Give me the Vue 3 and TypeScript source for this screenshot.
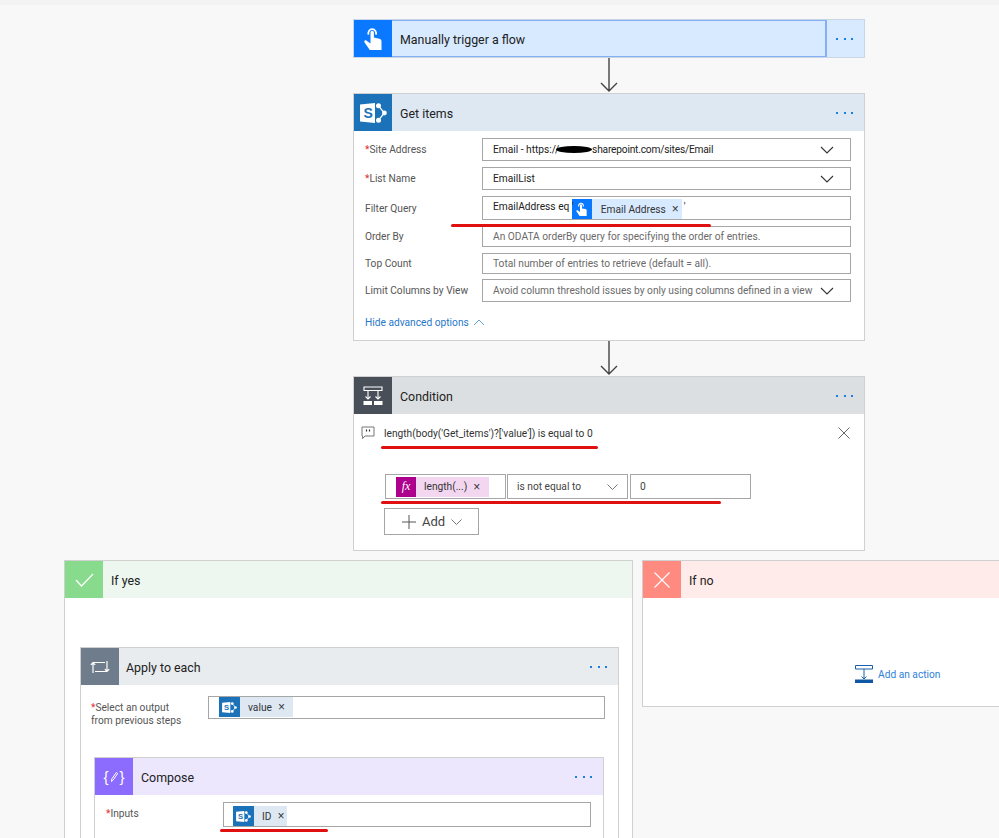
<script setup lang="ts">
interface Row { label: string; req?: boolean; value: string; ph?: boolean; chevron?: boolean; token?: boolean; h: number }
const rows: Row[] = [
  { label: 'Site Address', req: true, value: 'Email - https://', chevron: true, h: 23 },
  { label: 'List Name', req: true, value: 'EmailList', chevron: true, h: 23 },
  { label: 'Filter Query', value: 'EmailAddress eq \'', token: true, h: 24 },
  { label: 'Order By', value: 'An ODATA orderBy query for specifying the order of entries.', ph: true, h: 21 },
  { label: 'Top Count', value: 'Total number of entries to retrieve (default = all).', ph: true, h: 21 },
  { label: 'Limit Columns by View', value: 'Avoid column threshold issues by only using columns defined in a view', ph: true, chevron: true, h: 23 },
]
</script>

<template>
  <div class="page">
    <div class="topband"></div>
    <div class="flow">
      <section class="card trigger">
        <header class="head">
          <span class="ico">
            <svg width="18" height="23" viewBox="0 0 18 23"><path fill="#fff" d="M6.5 5.5a1.7 1.7 0 0 1 3.4 0V10.5l5.4 1.2c1.4.3 2.2 1.3 2.2 2.6V23H5.8L.6 15.4c-.9-1.3.7-2.7 2-1.7l3.9 2.9z"/><path fill="none" stroke="#fff" stroke-width="1.7" d="M4.6 7.6a3.9 3.9 0 1 1 7.2 0"/></svg>
          </span>
          <span class="title">Manually trigger a flow</span>
          <span class="more"><i></i><i></i><i></i></span>
        </header>
      </section>
      <div class="arrow"><svg width="18" height="35" viewBox="0 0 18 35"><path fill="none" stroke="#444" stroke-width="1.4" d="M9 0v33M1 25l8 8 8-8"/></svg></div>

      <section class="card sp-card">
        <header class="head">
          <span class="ico">
            <svg width="27" height="20" viewBox="0 0 27 20"><path fill="none" stroke="#fff" stroke-width="1.3" d="M18.5 2.8L24.4 10l-5.9 7.2"/><circle cx="18.5" cy="2.8" r="2.5" fill="#fff"/><circle cx="24.4" cy="10" r="2.4" fill="#fff"/><circle cx="18.5" cy="17.2" r="2.5" fill="#fff"/><path fill="#fff" d="M0 1.5L15 0v20L0 18.5z"/><text x="3.6" y="15" font-size="14" font-weight="700" fill="#1c72b8" font-family="Liberation Sans, sans-serif">S</text></svg>
          </span>
          <span class="title">Get items</span>
          <span class="more"><i></i><i></i><i></i></span>
        </header>
        <div class="fields">
          <div v-for="r in rows" :key="r.label" class="field" :style="{ height: r.h + 'px' }">
            <label class="lbl"><b v-if="r.req">*</b>{{ r.label }}</label>
            <div class="input" :class="{ ph: r.ph }">
              <template v-if="r.label === 'Site Address'">
                <span>Email - https://</span><span class="scribble"></span><span class="tight">sharepoint.com/sites/Email</span>
              </template>
              <template v-else-if="r.token">
                <span class="lift">EmailAddress eq '</span>
                <span class="token tok-blue">
                  <span class="tok-ico tok-ico-blue">
                    <svg width="11" height="14" viewBox="0 0 18 23"><path fill="#fff" d="M6.5 5.5a1.7 1.7 0 0 1 3.4 0V10.5l5.4 1.2c1.4.3 2.2 1.3 2.2 2.6V23H5.8L.6 15.4c-.9-1.3.7-2.7 2-1.7l3.9 2.9z"/><path fill="none" stroke="#fff" stroke-width="1.7" d="M4.6 7.6a3.9 3.9 0 1 1 7.2 0"/></svg>
                  </span>
                  <span class="tok-text">Email Address</span><span class="tok-x">×</span>
                </span>
                <span class="tick lift">'</span>
              </template>
              <span v-else class="val">{{ r.value }}</span>
              <svg v-if="r.chevron" class="chev" width="14" height="8" viewBox="0 0 14 8"><path fill="none" stroke="#333" stroke-width="1.1" d="M1 1l6 6 6-6"/></svg>
            </div>
          </div>
          <a class="advanced">Hide advanced options
            <svg width="12" height="7" viewBox="0 0 12 7"><path fill="none" stroke="#6a9fd8" stroke-width="1" d="M1 6l5-5 5 5"/></svg>
          </a>
        </div>
      </section>
      <div class="arrow"><svg width="18" height="35" viewBox="0 0 18 35"><path fill="none" stroke="#444" stroke-width="1.4" d="M9 0v33M1 25l8 8 8-8"/></svg></div>

      <section class="card cond">
        <header class="head">
          <span class="ico">
            <svg width="20" height="20" viewBox="0 0 20 20"><path fill="none" stroke="#fff" stroke-width="1.1" d="M1 1h18v3.5H1zM5 4.5V13M15 4.5V13"/><path fill="none" stroke="#fff" stroke-width="1.1" d="M2.5 10.5L5 13l2.5-2.5M12.5 10.5L15 13l2.5-2.5"/><path fill="#fff" d="M0.5 15h8.5v4H0.5zM11 15h8.5v4H11z"/></svg>
          </span>
          <span class="title">Condition</span>
          <span class="more"><i></i><i></i><i></i></span>
        </header>
        <div class="cond-body">
          <div class="comment">
            <svg width="14" height="14" viewBox="0 0 14 14"><path fill="none" stroke="#777" stroke-width="1" d="M1 1h12v9H4l-2.4 2.6V10H1z"/><path stroke="#333" stroke-width="1.2" d="M5.5 3.5v2M8.5 3.5v2"/></svg>
            <span>length(body('Get_items')?['value']) is equal to 0</span>
            <svg class="close" width="12" height="12" viewBox="0 0 12 12"><path stroke="#666" stroke-width="1" d="M.5.5l11 11M11.5.5l-11 11"/></svg>
          </div>
          <div class="cond-row">
            <div class="cbox c1">
              <span class="token tok-pink">
                <span class="tok-ico tok-ico-pink"><em>fx</em></span>
                <span class="tok-text t-len">length(...)</span><span class="tok-x">×</span>
              </span>
            </div>
            <div class="cbox c2"><span>is not equal to</span>
              <svg class="chev2" width="11" height="6" viewBox="0 0 11 6"><path fill="none" stroke="#777" stroke-width="1" d="M.5.5l5 5 5-5"/></svg>
            </div>
            <div class="cbox c3">0</div>
          </div>
          <div class="add-btn">
            <svg width="14" height="14" viewBox="0 0 14 14"><path stroke="#555" stroke-width="1" d="M7 0v14M0 7h14"/></svg>
            <span>Add</span>
            <svg width="11" height="6" viewBox="0 0 11 6"><path fill="none" stroke="#777" stroke-width="1" d="M.5.5l5 5 5-5"/></svg>
          </div>
        </div>
      </section>
    </div>

    <div class="branches">
      <section class="branch yes">
        <header class="head">
          <span class="ico">
            <svg width="19" height="14" viewBox="0 0 19 14"><path fill="none" stroke="#fff" stroke-width="1.2" d="M1 7l5.5 6L18 1"/></svg>
          </span>
          <span class="title">If yes</span>
        </header>
        <div class="yes-body">
          <section class="card each">
            <header class="head">
              <span class="ico">
                <svg width="20" height="14" viewBox="0 0 20 14"><path fill="none" stroke="#fff" stroke-width="1.2" d="M3 13V2.5h12M17 1v10.5H5M.8 4.8L3 2.5l2.2 2.3M14.8 9.2l2.2 2.3 2.2-2.3"/></svg>
              </span>
              <span class="title">Apply to each</span>
              <span class="more"><i></i><i></i><i></i></span>
            </header>
            <div class="each-row">
              <label class="lbl2"><b>*</b>Select an output<br />from previous steps</label>
              <div class="input slim">
                <span class="token tok-sp">
                  <span class="tok-ico tok-ico-sp">
                    <svg width="15" height="11" viewBox="0 0 27 20"><path fill="none" stroke="#fff" stroke-width="1.3" d="M18.5 2.8L24.4 10l-5.9 7.2"/><circle cx="18.5" cy="2.8" r="2.5" fill="#fff"/><circle cx="24.4" cy="10" r="2.4" fill="#fff"/><circle cx="18.5" cy="17.2" r="2.5" fill="#fff"/><path fill="#fff" d="M0 1.5L15 0v20L0 18.5z"/><text x="3.6" y="15" font-size="14" font-weight="700" fill="#1c72b8" font-family="Liberation Sans, sans-serif">S</text></svg>
                  </span>
                  <span class="tok-text">value</span><span class="tok-x">×</span>
                </span>
              </div>
            </div>
            <section class="card compose">
              <header class="head">
                <span class="ico">
                  <span class="brace">{</span>
                  <svg width="9" height="12" viewBox="0 0 9 12"><path fill="none" stroke="#fff" stroke-width="1" d="M1.5 10.5l.3-2.6L6.3 1.5l1.4 1-4.4 6.3-1.8 1.7z"/></svg>
                  <span class="brace">}</span>
                </span>
                <span class="title">Compose</span>
                <span class="more"><i></i><i></i><i></i></span>
              </header>
              <div class="comp-row">
                <label class="lbl3"><b>*</b>Inputs</label>
                <div class="input comp-input">
                  <span class="token tok-sp">
                    <span class="tok-ico tok-ico-sp">
                      <svg width="15" height="11" viewBox="0 0 27 20"><path fill="none" stroke="#fff" stroke-width="1.3" d="M18.5 2.8L24.4 10l-5.9 7.2"/><circle cx="18.5" cy="2.8" r="2.5" fill="#fff"/><circle cx="24.4" cy="10" r="2.4" fill="#fff"/><circle cx="18.5" cy="17.2" r="2.5" fill="#fff"/><path fill="#fff" d="M0 1.5L15 0v20L0 18.5z"/><text x="3.6" y="15" font-size="14" font-weight="700" fill="#1c72b8" font-family="Liberation Sans, sans-serif">S</text></svg>
                    </span>
                    <span class="tok-text t-id">ID</span><span class="tok-x">×</span>
                  </span>
                </div>
              </div>
            </section>
          </section>
        </div>
      </section>

      <section class="branch no">
        <header class="head">
          <span class="ico">
            <svg width="16" height="16" viewBox="0 0 16 16"><path stroke="#fff" stroke-width="1.1" d="M.5.5l15 15M15.5.5l-15 15"/></svg>
          </span>
          <span class="title">If no</span>
        </header>
        <div class="no-body">
          <a class="add-action">
            <svg width="18" height="18" viewBox="0 0 18 18"><path fill="none" stroke="#1a5ea8" stroke-width="1" d="M.5.5h17v3.5H.5zM9 4v10M6.5 11.5L9 14l2.5-2.5"/><path fill="#0f57a3" d="M0 14.5h18V18H0z"/></svg>
            <span>Add an action</span>
          </a>
        </div>
      </section>
    </div>

    <span class="mark m1"></span>
    <span class="mark m2"></span>
    <span class="mark m3"></span>
    <span class="mark m4"></span>
  </div>
</template>

<style>
html, body { margin: 0; background: #f8f8f8; }
</style>

<style scoped>
.page {
  position: relative;
  width: 999px;
  height: 838px;
  overflow: hidden;
  background: #f8f8f8;
  font-family: Roboto, "Noto Sans", sans-serif;
  color: #252525;
}
.topband { height: 5px; background: #f3f3f3; }
.flow { width: 512px; margin: 14px 0 0 353px; }

.card { background: #fff; border: 1px solid #d0d0d0; box-sizing: border-box; }
.head { display: flex; align-items: center; height: 37px; }
.ico {
  flex: none;
  width: 38px;
  height: 100%;
  display: flex;
  align-items: center;
  justify-content: center;
  position: relative;
}
.title { flex: 1; margin-left: 8px; padding-top: 2px; font-size: 12.4px; color: #222; }
.more { display: flex; gap: 5.5px; width: 17px; margin-right: 11px; }
.more i { width: 2px; height: 2px; background: #1a80e0; display: block; flex: none; }

.trigger { height: 39px; background: #d8eaff; border-color: #c9d6e6; }
.trigger .head { height: 37px; background: #d8eaff; }
.trigger .ico { background: #0a78ff; }
.trigger .title { align-self: stretch; display: flex; align-items: center; flex: 1; border-right: 2px solid #86aef2; border-top: 1px solid #86aef2; border-bottom: 1px solid #86aef2; padding-left: 8px; margin-left: 0; }
.trigger .more { margin-left: 9px; }

.arrow { height: 35px; display: flex; justify-content: center; }

.sp-card { height: 248px; }
.sp-card .head { background: #dde8f3; }
.sp-card .ico { background: #1c72b8; }

.fields { padding: 7px 13px 0 11px; }
.field { display: flex; align-items: center; margin-bottom: 6px; }
.field:nth-child(5) { margin-bottom: 5px; }
.lbl { width: 117px; flex: none; font-size: 10.2px; color: #555; white-space: nowrap; }
.lbl b, .lbl2 b, .lbl3 b { color: #d33; font-weight: 400; }
.input {
  flex: 1;
  min-width: 0;
  box-sizing: border-box;
  height: 100%;
  display: flex;
  align-items: center;
  border: 1px solid #a6a6a6;
  padding-left: 10px;
  font-size: 10.2px;
  color: #222;
  white-space: nowrap;
  background: #fff;
}
.input.ph { color: #6a6a6a; }
.val { flex: 1; min-width: 0; }
.chev { margin-left: auto; margin-right: 16px; flex: none; }
.scribble { width: 36px; height: 7px; background: #000; border-radius: 50%; margin: 0 0 0 -3px; }
.tight { letter-spacing: -0.2px; }
.tick { margin-left: 2px; }
.lift { position: relative; top: -2px; }

.token { display: inline-flex; align-items: center; height: 20px; white-space: nowrap; }
.tok-ico { display: flex; align-items: center; justify-content: center; width: 20px; height: 100%; flex: none; }
.tok-text { font-size: 10.2px; color: #333; }
.tok-x { font: 12px "Liberation Sans", sans-serif; color: #333; margin-left: 6px; }
.tok-blue { background: #d8eaff; padding-right: 3px; margin-left: -2px; margin-top: 2px; height: 20px; }
.tok-blue .tok-text { margin-left: 9px; }
.tok-ico-blue { background: #0a78ff; }
.tok-pink { background: #f3d7f0; padding-right: 9px; height: 20px; margin-left: 10px; }
.tok-pink .t-len { margin-left: 8px; }
.tok-ico-pink { background: #ad008c; color: #fff; }
.tok-ico-pink em { font: italic 12px "Liberation Serif", serif; }
.tok-sp { background: #dde8f3; padding-right: 8px; height: 20px; align-self: flex-start; }
.tok-sp .tok-text { margin-left: 8px; }
.tok-ico-sp { background: #1c72b8; width: 21px; }

.advanced { display: flex; align-items: center; gap: 4px; margin-top: 15px; font-size: 10.2px; color: #1f77c8; }

.cond { height: 175px; }
.cond .head { background: #dcdfe1; }
.cond .ico { background: #484f58; }
.cond-body { padding: 12px 0 0 7px; }
.comment { display: flex; align-items: center; height: 14px; font-size: 10.2px; color: #333; gap: 9px; padding-right: 14px; }
.comment .close { margin-left: auto; }
.cond-row { display: flex; margin: 34px 0 0 24px; gap: 1px; height: 25px; }
.cbox { box-sizing: border-box; border: 1px solid #a6a6a6; display: flex; align-items: center; font-size: 10.2px; color: #444; background: #fff; height: 100%; }
.c1 { width: 121px; }
.c2 { width: 121px; padding-left: 9px; }
.chev2 { margin-left: auto; margin-right: 9px; }
.c3 { width: 121px; margin-left: 1px; padding-left: 9px; }
.add-btn { box-sizing: border-box; display: flex; align-items: center; width: 95px; height: 27px; margin: 9px 0 0 23px; border: 1px solid #a6a6a6; padding-left: 17px; gap: 6px; font-size: 13px; color: #444; background: #fff; }

.branches { display: flex; gap: 9px; margin: 9px 0 0 64px; }
.branch { flex: none; background: #fff; border: 1px solid #d0d0d0; box-sizing: border-box; }
.branch .head { height: 37px; }
.yes { width: 569px; height: 400px; }
.yes .head:first-child { background: #edf7ef; }
.yes > .head .ico { background: #88da8d; }
.no { width: 400px; height: 147px; }
.no .head { background: #ffecea; }
.no .ico { background: #ff8a80; }
.yes-body { padding: 49px 13px 0 15px; }
.each { height: 300px; }
.each > .head { background: #e9ecef !important; }
.each > .head .ico { background: #6f7c8c; }
.each > .head .title { margin-left: 7px; }
.each-row { display: flex; height: 23px; padding: 11px 13px 0 10px; }
.lbl2 { width: 117px; flex: none; font-size: 10.2px; line-height: 13px; color: #555; white-space: nowrap; padding-top: 5px; }
.slim { padding-left: 10px; }
.compose { width: 510px; height: 200px; margin: 38px 0 0 13px; }
.compose > .head { background: #ece7fd !important; }
.compose > .head .ico { background: #8c6cff; gap: 1px; }
.brace { color: #fff; font: 15px "Liberation Sans", sans-serif; }
.comp-row { display: flex; height: 25px; padding: 7px 12px 0 11px; }
.lbl3 { width: 117px; flex: none; font-size: 10.2px; color: #555; line-height: 24px; }
.comp-input { padding-left: 9px; }
.comp-input .tok-sp { padding-right: 3px; margin-top: 3px; }
.t-id { margin-left: 7px; }
.no-body { display: flex; justify-content: flex-start; padding: 67px 0 0 212px; }
.add-action { display: flex; align-items: center; gap: 5px; font-size: 10.2px; color: #2f7fd6; }

.mark { position: absolute; height: 3px; background: #e01010; border-radius: 2px; }
.m1 { left: 451px; top: 224px; width: 260px; }
.m2 { left: 381px; top: 446px; width: 217px; }
.m3 { left: 381px; top: 501px; width: 340px; }
.m4 { left: 220px; top: 829px; width: 108px; }
</style>
